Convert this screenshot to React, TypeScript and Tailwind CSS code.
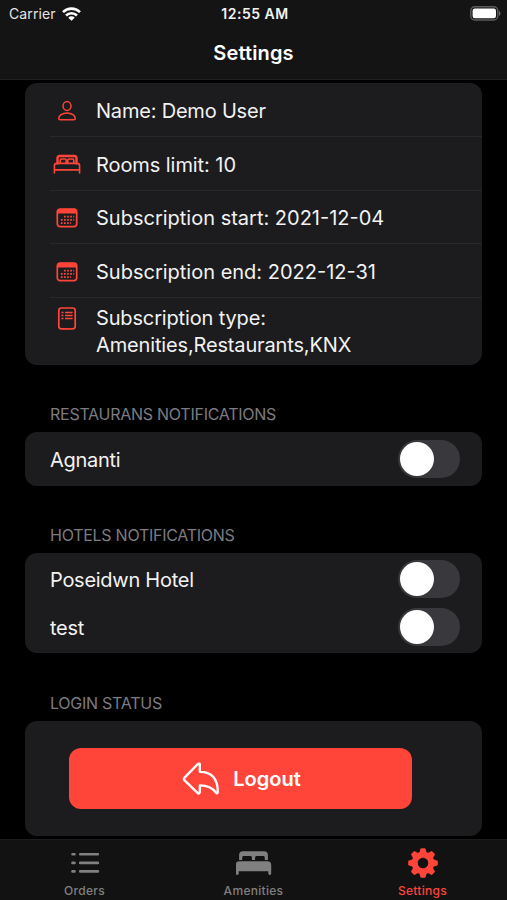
import { useState } from "react";
import type { ReactNode } from "react";

function WifiIcon() {
  return (
    <svg width="19" height="14" viewBox="0 0 19 14" fill="none" stroke="#fff" strokeWidth="2.6">
      <path d="M1 5.1a12.2 12.2 0 0 1 17 0" />
      <path d="M4 8.5a7.8 7.8 0 0 1 11 0" />
      <path d="M9.5 13.8 6.3 10.7a4.5 4.5 0 0 1 6.4 0z" fill="#fff" stroke="none" />
    </svg>
  );
}

function BatteryIcon() {
  return (
    <svg width="31" height="15" viewBox="0 0 31 15" fill="none">
      <rect x="0.8" y="0.8" width="27" height="13.2" rx="4" stroke="#5c5c5c" strokeWidth="1.4" />
      <rect x="2.6" y="2.6" width="23.4" height="9.6" rx="2.2" fill="#fff" />
      <path d="M29 5c1.9.5 1.9 4.3 0 4.8z" fill="#6b6b6b" />
    </svg>
  );
}

function PersonIcon() {
  return (
    <svg width="28" height="24" viewBox="0 0 28 24" fill="none" stroke="#ff453a" strokeWidth="1.5">
      <ellipse cx="14" cy="7" rx="4" ry="4.4" />
      <path d="M14 13.9c-4.8 0-8.3 2.9-8.3 5.5 0 1 .5 1.300 1.500 1.300h13.600c1 0 1.500-.3 1.500-1.300 0-2.600-3.500-5.500-8.300-5.500z" />
    </svg>
  );
}

function BedIcon() {
  return (
    <svg width="28" height="24" viewBox="0 0 28 24" fill="none" stroke="#ff453a" strokeWidth="1.6" strokeLinejoin="round" strokeLinecap="round">
      <path d="M4.5 10.500V5.300c0-1.600.8-2.300 2.300-2.300h14.400c1.500 0 2.300.7 2.300 2.300v5.200" strokeWidth="2.400" />
      <path d="M7.200 10.200V7.200c0-.8.4-1.200 1.200-1.200h3.600c.8 0 1.200.4 1.200 1.200v3M14.800 10.200v-3c0-.8.4-1.200 1.200-1.200h3.600c.8 0 1.200.4 1.200 1.200v3" />
      <path d="M1.400 20v-7.300c0-1.500.8-2.300 2.300-2.300h20.600c1.500 0 2.300.8 2.300 2.300V20M1.400 16.900h25.200" />
    </svg>
  );
}

function CalendarIcon() {
  return (
    <svg width="28" height="24" viewBox="0 0 28 24" fill="none" stroke="#ff453a">
      <rect x="4.3" y="3" width="19.4" height="17.6" rx="2.800" strokeWidth="1.700" />
      <path d="M4 7.500V5.800c0-2 1-3 3-3h14c2 0 3 1 3 3v1.700z" fill="#ff453a" stroke="none" />
      <g strokeWidth="1.700" strokeDasharray="1.700 1.400">
        <path d="M11 10.700h10.200" />
        <path d="M7.900 13.900h13.300" />
        <path d="M7.900 17.100h10.200" />
      </g>
    </svg>
  );
}

function DocIcon() {
  return (
    <svg width="28" height="24" viewBox="0 0 28 24" fill="none" stroke="#ff453a">
      <rect x="5.8" y="1" width="16.4" height="20.8" rx="2.6" strokeWidth="1.7" />
      <g strokeWidth="1.5">
        <path d="M8.400 5.500h2.100M12 5.500h7.600" />
        <path d="M8.400 8.500h2.100M12 8.500h7.600" />
        <path d="M8.400 11.500h2.100M12 11.500h7.600" />
      </g>
    </svg>
  );
}

function ReplyIcon() {
  return (
    <svg width="38" height="34" viewBox="0 0 38 34" fill="none" stroke="#fff" strokeWidth="2.3" strokeLinejoin="round">
      <path d="M17.8 2.300v7.600c12.200 0 18 7.600 18 20.200 0 1.500-1 1.700-1.900.5-3.700-5.400-8.500-7.200-16.100-7.200v6.700c0 1.500-1.200 1.900-2.300.8L2.600 18.400c-1-1-1-1.800 0-2.800L15.400 2.400c1-1.100 2.400-1.200 2.400-.1z" />
    </svg>
  );
}

function OrdersIcon() {
  return (
    <svg width="36" height="30" viewBox="0 0 36 30" fill="none" stroke="#808080" strokeWidth="2.6" strokeLinecap="round">
      <path d="M5.500 6.300h2M13.200 6.300h17.700" strokeWidth="2.600" />
      <path d="M5.500 14.900h2M13.200 14.900h17.700" />
      <path d="M5.500 23.400h2M13.200 23.400h17.700" />
    </svg>
  );
}

function AmenitiesIcon() {
  return (
    <svg width="36" height="30" viewBox="0.500 0 36 30" fill="#808080">
      <path d="M3.6 12V7c0-2.500 1.300-3.800 3.800-3.800h21.200c2.500 0 3.800 1.300 3.800 3.800v5h-3.100V9.500c0-1-.6-1.600-1.600-1.600h-6.500c-1 0-1.600.6-1.600 1.600V12h-3.200V9.500c0-1-.6-1.600-1.600-1.600H8.300c-1 0-1.600.6-1.600 1.600V12z" />
      <path d="M.3 17c0-2.500 1.300-3.700 3.700-3.700h28c2.400 0 3.700 1.200 3.700 3.700v8.500c0 .9-.5 1.400-1.400 1.400s-1.500-.5-1.500-1.400v-2.200H3.200v2.200c0 .9-.5 1.400-1.500 1.400S.3 26.400.3 25.500z" />
    </svg>
  );
}

function GearIcon() {
  return (
    <svg width="36" height="30" viewBox="-18 -15 36 30" fill="#ff453a">
      <circle r="8.3" fill="none" stroke="#ff453a" strokeWidth="6" />
      {[0, 45, 90, 135, 180, 225, 270, 315].map((deg) => (
        <path key={deg} d="M-3.7-10 -2.600-14q.2-.8 1-.8h3.200q.8 0 1 .8L3.700-10z" transform={`rotate(${deg})`} />
      ))}
    </svg>
  );
}

const details = [
  { icon: <PersonIcon />, text: "Name: Demo User", tracking: "tracking-[-0.2px]" },
  { icon: <BedIcon />, text: "Rooms limit: 10", tracking: "tracking-[-0.07px]" },
  { icon: <CalendarIcon />, text: "Subscription start: 2021-12-04", tracking: "tracking-normal" },
  { icon: <CalendarIcon />, text: "Subscription end: 2022-12-31", tracking: "tracking-normal" },
];

function SectionTitle({ children }: { children: ReactNode }) {
  return <h2 className="pl-[25px] text-[16px] leading-5 tracking-[-0.26px] text-[#7c7c80]">{children}</h2>;
}

function ToggleRow({ label }: { label: string }) {
  const [on, setOn] = useState(false);

  return (
    <div className="flex h-12 items-center justify-between pr-[22px] pl-[25px]">
      <span className="pt-0.5 tracking-[-0.27px]">{label}</span>
      <button
        role="switch"
        aria-checked={on}
        aria-label={label}
        onClick={() => setOn(!on)}
        className={`flex h-[38px] w-[62px] items-center rounded-full px-0.5 ${on ? "justify-end bg-[#30d158]" : "bg-[#39393d]"}`}
      >
        <span className="size-[34px] rounded-full bg-white" />
      </button>
    </div>
  );
}

const tabs = [
  { label: "Orders", icon: <OrdersIcon />, color: "text-[#808080]" },
  { label: "Amenities", icon: <AmenitiesIcon />, color: "text-[#808080]" },
  { label: "Settings", icon: <GearIcon />, color: "text-[#ff453a]" },
];

export default function App() {
  return (
    <div className="flex h-[900px] w-[507px] flex-col overflow-hidden bg-black font-['Inter','Liberation_Sans',sans-serif] text-[20px] text-[#f2f2f2]">
      {/* Header */}
      <header className="h-20 shrink-0 border-b border-[#202020] bg-[#141414]">
        <div className="grid h-[27px] grid-cols-3 items-center pr-[6px] pl-[9px] text-[14px] text-[#e4e4e4]">
          <div className="flex items-center gap-1.5">
            <span className="tracking-[0.1px]">Carrier</span>
            <WifiIcon />
          </div>
          <span className="text-center font-semibold tracking-[0.5px] whitespace-nowrap text-[#f2f2f2]">12:55 AM</span>
          <div className="flex justify-end">
            <BatteryIcon />
          </div>
        </div>
        <h1 className="pt-3 text-center text-[20px] leading-7 font-semibold tracking-[0.15px] text-white">Settings</h1>
      </header>

      <main className="flex-1 px-[25px] pt-[3px]">
        {/* Account details */}
        <section className="h-[282px] rounded-[12px] bg-[#1c1c1e] pl-[25px]">
          {details.map((item) => (
            <div key={item.text} className="flex h-[53.750px] items-center border-b border-[#28282a] pt-[3px] pl-[3px]">
              {item.icon}
              <span className={`ml-[15px] whitespace-nowrap ${item.tracking}`}>{item.text}</span>
            </div>
          ))}
          <div className="flex pt-[7px] pl-[3px]">
            <div className="pt-0.5">
              <DocIcon />
            </div>
            <p className="ml-[15px] leading-[27px] tracking-[-0.15px]">
              Subscription type:
              <br />
              Amenities,Restaurants,KNX
            </p>
          </div>
        </section>

        {/* Notifications */}
        <div className="mt-[39px]">
          <SectionTitle>RESTAURANS NOTIFICATIONS</SectionTitle>
          <section className="mt-2 rounded-[12px] bg-[#1c1c1e] py-[3px]">
            <ToggleRow label="Agnanti" />
          </section>
        </div>

        <div className="mt-[39px]">
          <SectionTitle>HOTELS NOTIFICATIONS</SectionTitle>
          <section className="mt-2 rounded-[12px] bg-[#1c1c1e] py-0.5">
            <ToggleRow label="Poseidwn Hotel" />
            <ToggleRow label="test" />
          </section>
        </div>

        {/* Logout */}
        <div className="mt-10">
          <SectionTitle>LOGIN STATUS</SectionTitle>
          <section className="mt-2 h-[115px] rounded-[12px] bg-[#1c1c1e] px-11 pt-[27px]">
            <button className="flex h-[61px] w-[343px] items-center justify-center gap-[13px] rounded-[12px] bg-[#ff453a] pt-px pl-0.5 text-[20px] font-semibold text-white">
              <ReplyIcon />
              Logout
            </button>
          </section>
        </div>
      </main>

      {/* Tab bar */}
      <nav className="grid h-[61px] shrink-0 grid-cols-3 border-t border-[#1c1c1c] bg-[#121212]">
        {tabs.map((tab) => (
          <button key={tab.label} className={`flex flex-col items-center pt-2 text-[12px] font-medium tracking-[0.3px] ${tab.color}`}>
            {tab.icon}
            <span className="mt-[5px] leading-4">{tab.label}</span>
          </button>
        ))}
      </nav>
    </div>
  );
}
